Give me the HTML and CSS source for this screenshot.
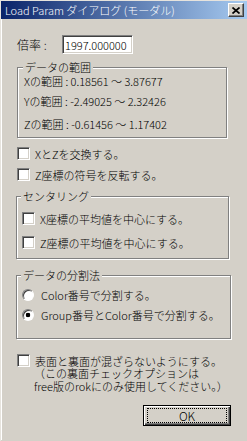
FILE: index.html
```html
<!DOCTYPE html>
<html lang="ja">
<head>
  <meta charset="UTF-8">
  <meta name="viewport" content="width=device-width, initial-scale=1.0">
  <title>Load Param ダイアログ (モーダル)</title>
  <link rel="stylesheet" href="styles.css">
</head>
<body>
  <div class="window">
    <div class="titlebar">
      <span class="title">Load Param ダイアログ (モーダル)</span>
      <button class="close-btn" aria-label="閉じる">
        <svg width="8" height="7" viewBox="0 0 8 7">
          <path d="M0.5 0.5 L7.5 6.5 M7.5 0.5 L0.5 6.5" stroke="#000" stroke-width="1.7" fill="none"/>
        </svg>
      </button>
    </div>

    <div class="dialog">
      <div class="scale-row">
        <label class="scale-label" for="scale">倍率 :</label>
        <input class="scale-input" id="scale" type="text" value="1997.000000">
      </div>

      <fieldset class="group group--range">
        <legend>データの範囲</legend>
        <p class="range-line">Xの範囲 : 0.18561 ～ 3.87677</p>
        <p class="range-line range-line--y">Yの範囲 : -2.49025 ～ 2.32426</p>
        <p class="range-line range-line--z">Zの範囲 : -0.61456 ～ 1.17402</p>
      </fieldset>

      <div class="check check--swap"><span class="check-box"></span>XとZを交換する。</div>
      <div class="check check--flip"><span class="check-box"></span>Z座標の符号を反転する。</div>

      <fieldset class="group group--center">
        <legend>センタリング</legend>
        <div class="check"><span class="check-box"></span>X座標の平均値を中心にする。</div>
        <div class="check check--second"><span class="check-box"></span>Z座標の平均値を中心にする。</div>
      </fieldset>

      <fieldset class="group group--split">
        <legend>データの分割法</legend>
        <div class="radio"><span class="radio-dot"></span>Color番号で分割する。</div>
        <div class="radio radio--second"><span class="radio-dot radio-dot--on"></span>Group番号とColor番号で分割する。</div>
      </fieldset>

      <div class="check check--surface"><span class="check-box"></span>表面と裏面が混ざらないようにする。</div>
      <p class="note">（この裏面チェックオプションは</p>
      <p class="note">free版のrokにのみ使用してください。）</p>

      <div class="button-row">
        <button class="ok-button"><span class="ok-focus">OK</span></button>
      </div>
    </div>
  </div>
</body>
</html>
```

FILE: styles.css
```css
body {
  margin: 0;
  background-color: #d4d0c8;
  font-family: "Noto Sans CJK JP", sans-serif;
  font-size: 11px;
  font-weight: 300;
  color: #000000;
}

.window {
  width: 247px;
  height: 441px;
  box-sizing: border-box;
  border-top: 1px solid #e6e3dd;
  border-left: 1px solid #e6e3dd;
  background-color: #d4d0c8;
}

/* Title bar */
.titlebar {
  display: flex;
  align-items: center;
  height: 18px;
  padding-left: 4px;
  background: linear-gradient(to right, #0a246a, #a6caf0);
  color: #ffffff;
}

.title {
  line-height: 18px;
  white-space: nowrap;
}

.close-btn {
  display: flex;
  align-items: center;
  justify-content: center;
  width: 16px;
  height: 14px;
  box-sizing: border-box;
  margin-left: auto;
  margin-right: 3px;
  padding: 0;
  background-color: #d4d0c8;
  border: 1px solid;
  border-color: #ffffff #404040 #404040 #ffffff;
  box-shadow: inset -1px -1px 0 #808080;
}

/* Dialog body */
.dialog {
  border-left: 1px solid #ffffff;
  padding: 16px 15px 0 15px;
  height: 421px;
  box-sizing: border-box;
}

.scale-row {
  display: flex;
  align-items: center;
  height: 19px;
}

.scale-label {
  width: 45px;
  line-height: 14px;
  font-size: 12px;
}

.scale-input {
  width: 71px;
  height: 19px;
  box-sizing: border-box;
  margin: 0;
  padding: 0 2px;
  font: inherit;
  color: #000000;
  background-color: #ffffff;
  border: 1px solid;
  border-color: #808080 #ffffff #ffffff #808080;
  box-shadow: inset 1px 1px 0 #404040, inset -1px -1px 0 #d4d0c8;
  outline: none;
}

/* Group boxes */
.group {
  min-width: 0;
  border: 1px solid #808080;
  box-shadow: inset 1px 1px 0 #ffffff, 1px 1px 0 #ffffff;
}

.group legend {
  margin-left: -1px;
  padding: 0 2px;
  line-height: 14px;
  background-color: #d4d0c8;
}

.group--range {
  margin: 6px 5px 0 0;
  padding: 0 0 6px 6px;
}

.group--center {
  margin: 8px 3px 0 -1px;
  padding: 9px 0 9px 5px;
}

.group--split {
  margin: 9px 1px 0 -1px;
  padding: 7px 0 17px 5px;
}

.range-line {
  margin: 0;
  line-height: 14px;
  white-space: nowrap;
}

.range-line--y {
  margin-top: 6px;
}

.range-line--z {
  margin-top: 9px;
}

/* Checkboxes and radios */
.check,
.radio {
  display: flex;
  align-items: center;
  height: 13px;
  line-height: 14px;
  white-space: nowrap;
}

.check {
  gap: 5px;
}

.radio {
  gap: 7px;
  height: 12px;
}

.check--swap {
  margin-top: 9px;
}

.check--flip {
  margin-top: 8px;
}

.check--second {
  margin-top: 11px;
}

.radio--second {
  margin-top: 8px;
}

.check--surface {
  margin-top: 15px;
}

.check-box {
  flex: none;
  width: 13px;
  height: 13px;
  box-sizing: border-box;
  background-color: #ffffff;
  border: 1px solid;
  border-color: #808080 #ffffff #ffffff #808080;
  box-shadow: inset 1px 1px 0 #404040, inset -1px -1px 0 #d4d0c8;
}

.radio-dot {
  flex: none;
  width: 12px;
  height: 12px;
  box-sizing: border-box;
  border-radius: 50%;
  background-color: #ffffff;
  border: 1px solid;
  border-color: #808080 #ffffff #ffffff #808080;
  box-shadow: inset 1px 1px 0 #404040;
}

.radio-dot--on {
  background: radial-gradient(circle, #000000 0 2px, #ffffff 2.6px);
}

.note {
  margin: 0;
  padding-left: 17px;
  line-height: 13px;
  white-space: nowrap;
}

/* OK button */
.button-row {
  display: flex;
  justify-content: flex-end;
  margin-top: 12px;
}

.ok-button {
  width: 88px;
  height: 21px;
  box-sizing: border-box;
  margin-right: 1px;
  padding: 2px 3px;
  font: inherit;
  font-size: 12px;
  color: #000000;
  background-color: #d4d0c8;
  border: 1px solid #000000;
  box-shadow: inset 1px 1px 0 #ffffff, inset -1px -1px 0 #404040, inset -2px -2px 0 #808080;
}

.ok-focus {
  display: block;
  height: 15px;
  box-sizing: border-box;
  border: 1px dotted #000000;
  line-height: 13px;
}
```
